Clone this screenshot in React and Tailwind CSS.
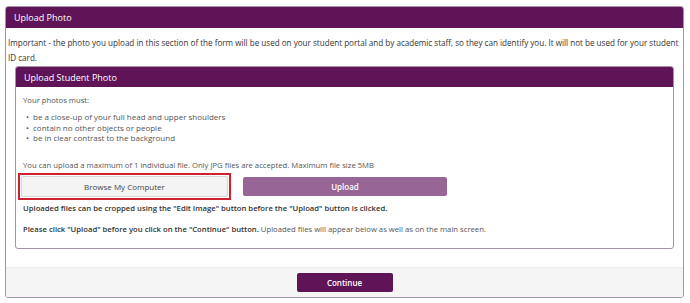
import React from "react";

const font = { fontFamily: '"Open Sans", "Liberation Sans", sans-serif' };

function App() {
  return (
    <div className="w-[690px] h-[303px] bg-white pt-[6px] pl-[5px]" style={font}>
      <div className="w-[679px] border border-[#a793a6] rounded-[3px] overflow-hidden">
        <div className="h-[21px] bg-[#5f1458] text-white text-[9px] pl-[8px] flex items-center">
          Upload Photo
        </div>
        <div className="px-[1px] pt-[7px] pb-0 text-[8.1px] leading-[15px] text-[#333]">
          <p className="pl-[1px]">
            Important - the photo you upload in this section of the form will be used on your student portal and by academic staff, so they can identify you. It will not be used for your student ID card.
          </p>
          <div className="mx-[8px] mt-[1px] border border-[#a793a6] rounded-[3px] overflow-hidden">
            <div className="h-[20px] bg-[#5f1458] text-white text-[9px] pl-[8px] flex items-center">
              Upload Student Photo
            </div>
            <div className="px-[7px] pt-[6px] pb-[11px] text-[7.7px] text-[#555]">
              <p>Your photos must:</p>
              <ul className="mt-[4px] ml-[3px] leading-[10.7px] text-[8px]">
                <li className="flex gap-[4px]"><span>•</span>be a close-up of your full head and upper shoulders</li>
                <li className="flex gap-[4px]"><span>•</span>contain no other objects or people</li>
                <li className="flex gap-[4px]"><span>•</span>be in clear contrast to the background</li>
              </ul>
              <p className="mt-[14px]">
                You can upload a maximum of 1 individual file. Only JPG files are accepted. Maximum file size 5MB
              </p>
              <div className="flex items-center gap-[12px] -ml-[5px]">
                <div className="border-[2px] border-[#d0202e] p-[1px]">
                  <button className="w-[207px] h-[21px] bg-[#f4f4f4] border border-[#d6d6d6] rounded-[2px] text-[#444] text-[8px]">
                    Browse My Computer
                  </button>
                </div>
                <button className="w-[204px] h-[19px] bg-[#976596] rounded-[2px] text-white text-[8px] font-semibold">
                  Upload
                </button>
              </div>
              <p className="mt-[1px] font-semibold text-[#333]">
                Uploaded files can be cropped using the "Edit Image" button before the "Upload" button is clicked.
              </p>
              <p className="mt-[6px]">
                <span className="font-semibold text-[#333]">Please click "Upload" before you click on the "Continue" button.</span>{" "}
                Uploaded files will appear below as well as on the main screen.
              </p>
            </div>
          </div>
        </div>
        <div className="mt-[18px] bg-[#f5f5f5] border-t border-[#ececec] h-[30px] flex items-center justify-center">
          <button className="w-[96px] h-[19px] bg-[#5f1458] rounded-[2px] text-white text-[8px] font-semibold">
            Continue
          </button>
        </div>
      </div>
    </div>
  );
}

export default App;
